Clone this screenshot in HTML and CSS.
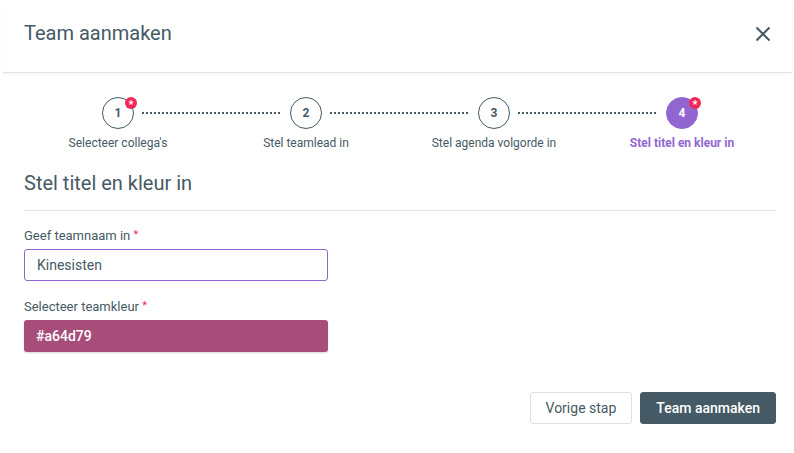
FILE: index.html
```html
<!DOCTYPE html>
<html lang="nl">
<head>
  <meta charset="UTF-8" />
  <title>Team aanmaken</title>
  <link rel="stylesheet" href="styles.css">
</head>
<body>
  <div class="modal">
    <div class="modal-header">
      <h2>Team aanmaken</h2>
      <button class="close-btn" aria-label="Sluiten">
        <svg width="16" height="16" viewBox="0 0 16 16"><path d="M1.5 1.5 L14.5 14.5 M14.5 1.5 L1.5 14.5" stroke="#455a64" stroke-width="2" fill="none"/></svg>
      </button>
    </div>

    <div class="modal-body">
      <div class="steps">
        <div class="step">
          <div class="circle">1<span class="badge">*</span></div>
          <div class="step-label">Selecteer collega's</div>
        </div>
        <div class="step">
          <div class="circle">2</div>
          <div class="step-label">Stel teamlead in</div>
        </div>
        <div class="step">
          <div class="circle">3</div>
          <div class="step-label">Stel agenda volgorde in</div>
        </div>
        <div class="step active">
          <div class="circle">4<span class="badge">*</span></div>
          <div class="step-label">Stel titel en kleur in</div>
        </div>
      </div>

      <h3 class="section-title">Stel titel en kleur in</h3>

      <div class="field">
        <label>Geef teamnaam in <span class="req">*</span></label>
        <input type="text" class="text-input" value="Kinesisten">
      </div>

      <div class="field">
        <label>Selecteer teamkleur <span class="req">*</span></label>
        <div class="color-box" style="background:#a64d79;">#a64d79</div>
      </div>

      <div class="actions">
        <button class="btn btn-light">Vorige stap</button>
        <button class="btn btn-dark">Team aanmaken</button>
      </div>
    </div>
  </div>
</body>
</html>
```

FILE: styles.css
```css
body {
  margin: 0;
  font-family: Roboto, "Liberation Sans", sans-serif;
  color: #455a64;
  background: #fff;
}

.modal {
  width: 794px;
  height: 453px;
  background: #fff;
}

/* header */
.modal-header {
  display: flex;
  align-items: flex-start;
  justify-content: space-between;
  height: 51px;
  padding: 21px 21px 0 21px;
  margin: 0 2px 0 3px;
  border-bottom: 1px solid #e3e3e3;
  box-shadow: 0 2px 3px rgba(0, 0, 0, 0.03);
}

.modal-header h2 {
  margin: 0;
  font-size: 20px;
  font-weight: 400;
  color: #455a64;
}

.close-btn {
  border: none;
  background: none;
  padding: 0;
  margin-top: 5px;
  cursor: pointer;
  display: flex;
}

.modal-body {
  padding: 24px 18px 0 24px;
}

/* steps */
.steps {
  display: grid;
  grid-template-columns: repeat(4, 1fr);
}

.step {
  position: relative;
  display: flex;
  flex-direction: column;
  align-items: center;
}

.step:not(:last-child)::after {
  content: "";
  position: absolute;
  top: 15px;
  left: calc(50% + 24px);
  width: calc(100% - 48px);
  height: 2px;
  background: repeating-linear-gradient(90deg, #455a64 0 2.5px, transparent 2.5px 4px);
}

.circle {
  position: relative;
  width: 30px;
  height: 30px;
  border: 1px solid #455a64;
  border-radius: 50%;
  display: flex;
  align-items: center;
  justify-content: center;
  font-size: 12px;
  font-weight: 700;
  color: #455a64;
}

.badge {
  position: absolute;
  top: -1px;
  right: -4px;
  width: 12px;
  height: 12px;
  border-radius: 50%;
  background: #f0285a;
  color: #fff;
  font-size: 11px;
  line-height: 15px;
  text-align: center;
  font-weight: 700;
}

.step-label {
  margin-top: 7px;
  font-size: 12px;
  color: #455a64;
}

.step.active .circle {
  background: #9266d0;
  border-color: #9266d0;
  color: #fff;
}

.step.active .step-label {
  color: #9266d0;
  font-weight: 700;
}

/* form */
.section-title {
  margin: 21px 0 0;
  padding-bottom: 15px;
  font-size: 20px;
  font-weight: 400;
  color: #455a64;
  border-bottom: 1px solid #e3e3e3;
}

.field {
  margin-top: 17px;
}

.field + .field {
  margin-top: 18px;
}

.field label {
  display: block;
  font-size: 13px;
  margin-bottom: 6px;
  color: #455a64;
}

.req {
  color: #f0285a;
  font-size: 11px;
  vertical-align: 2px;
}

.text-input {
  box-sizing: border-box;
  width: 304px;
  height: 32px;
  padding: 0 12px;
  border: 1px solid #9266d0;
  border-radius: 3px;
  font-family: inherit;
  font-size: 14px;
  color: #455a64;
  outline: none;
}

.color-box {
  box-sizing: border-box;
  width: 304px;
  height: 32px;
  padding: 0 12px;
  border-radius: 3px;
  display: flex;
  align-items: center;
  color: #fff;
  font-size: 14px;
  font-weight: 500;
  box-shadow: 0 1px 2px rgba(0, 0, 0, 0.15);
}

.actions {
  display: flex;
  justify-content: flex-end;
  gap: 8px;
  margin-top: 40px;
}

.btn {
  height: 32px;
  padding: 0 15px;
  border-radius: 3px;
  font-family: inherit;
  font-size: 14px;
  cursor: pointer;
}

.btn-light {
  background: #fff;
  border: 1px solid #dde1e3;
  color: #455a64;
}

.btn-dark {
  background: #455a64;
  border: 1px solid #455a64;
  color: #fff;
  font-weight: 500;
}
```
